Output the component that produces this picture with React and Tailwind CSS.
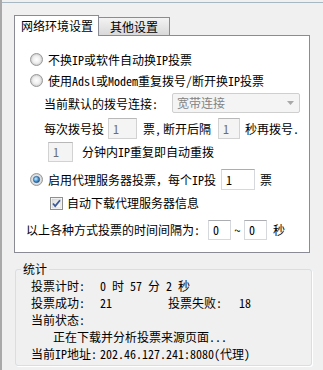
import React from 'react';

const Radio = ({ checked, id }) => (
  <svg width="13" height="13" viewBox="0 0 13 13" className="shrink-0">
    <defs>
      <radialGradient id={`rb-${id}`} cx="0.5" cy="0.5" r="0.5">
        <stop offset="0" stopColor="#ffffff" />
        <stop offset="0.6" stopColor="#eeeeee" />
        <stop offset="1" stopColor="#c8c8c8" />
      </radialGradient>
      <radialGradient id={`rd-${id}`} cx="0.4" cy="0.4" r="0.6">
        <stop offset="0" stopColor="#d6f0ff" />
        <stop offset="0.5" stopColor="#5ca8e0" />
        <stop offset="1" stopColor="#1d4f85" />
      </radialGradient>
    </defs>
    <circle cx="6.5" cy="6.5" r="6" fill={`url(#rb-${id})`} stroke="#9a9a9a" />
    {checked && <circle cx="6.5" cy="6.5" r="3.2" fill={`url(#rd-${id})`} stroke="#2b5d8f" strokeWidth="0.6" />}
  </svg>
);

const Check = () => (
  <svg width="13" height="13" viewBox="0 0 13 13" className="shrink-0">
    <defs>
      <linearGradient id="cbg" x1="0" y1="0" x2="1" y2="1">
        <stop offset="0" stopColor="#dcdcdc" />
        <stop offset="1" stopColor="#ffffff" />
      </linearGradient>
    </defs>
    <rect x="0.5" y="0.5" width="12" height="12" fill="#fff" stroke="#8e8f8f" />
    <rect x="2" y="2" width="9" height="9" fill="url(#cbg)" stroke="#c4c4c4" strokeWidth="0.5" />
    <path d="M3 6.5 L5.2 9 L10 3.2" fill="none" stroke="#3c5a9a" strokeWidth="1.8" />
  </svg>
);

const Box = ({ value, w, h = 'h-[21px]', disabled }) => (
  <div
    className={`${w} ${h} shrink-0 border flex items-center pl-[4px] text-[12px] leading-[12px] ${
      disabled
        ? 'bg-[#f4f4f4] border-[#d2d2d2] border-t-[#b8b8b8] text-[#6d6d6d]'
        : 'bg-white border-[#d5d8dd] border-t-[#abadb3] text-black'
    }`}
  >
    {value}
  </div>
);

export default function App() {
  return (
    <div className="w-[323px] h-[370px] overflow-hidden bg-[#f0f0f0] border-l-2 border-[#a9a9a9] font-['Noto_Sans_Mono_CJK_SC','Noto_Sans_CJK_SC',monospace] text-[12px] leading-[14px] text-black">
      <div className="mt-[2px] h-[368px] border-t border-[#a7b8c2] pl-[12px] pt-[12px]">
        {/* tabs */}
        <div className="flex items-end h-[20px]">
          <div className="relative z-10 w-[85px] h-[21px] -mb-px bg-white border border-b-0 border-[#898c95] pl-[6px] pt-[3px]">
            网络环境设置
          </div>
          <div className="w-[71px] h-[18px] border border-b-0 border-l-0 border-[#898c95] bg-gradient-to-b from-[#f3f3f3] to-[#d9d9d9] flex items-center justify-center pt-[1px]">
            其他设置
          </div>
        </div>

        {/* panel */}
        <div className="w-[296px] h-[218px] border border-[#898c95] bg-white pt-[13px]">
          <div className="flex items-center h-[21px] pl-[15px]">
            <Radio id="a" />
            <span className="ml-[5px]">不换IP或软件自动换IP投票</span>
          </div>
          <div className="flex items-center h-[21px] pl-[15px]">
            <Radio id="b" />
            <span className="ml-[5px]">使用Adsl或Modem重复拨号/断开换IP投票</span>
          </div>
          <div className="flex items-center h-[21px] pl-[29px] mt-px">
            <span className="w-[128px] shrink-0 pt-[2px]">当前默认的拨号连接:</span>
            <div className="w-[128px] h-[20px] rounded-[2px] border border-[#cfcfcf] bg-[#f4f4f4] flex items-center justify-between pl-[4px] pr-[5px] text-[#838383]">
              <span>宽带连接</span>
              <svg width="7" height="4" viewBox="0 0 7 4">
                <path d="M0 0 H7 L3.5 4 Z" fill="#a8a8a8" />
              </svg>
            </div>
          </div>
          <div className="flex items-center h-[21px] pl-[29px] mt-[5px]">
            <span className="w-[64px] shrink-0">每次拨号投</span>
            <Box value="1" w="w-[29px]" disabled />
            <span className="w-[26px] shrink-0 pl-[6px]">票,</span>
            <span className="w-[55px] shrink-0">断开后隔</span>
            <Box value="1" w="w-[22px]" disabled />
            <span className="ml-[5px]">秒再拨号.</span>
          </div>
          <div className="flex items-center h-[20px] pl-[33px] mt-[3px]">
            <Box value="1" w="w-[25px]" h="h-[20px]" disabled />
            <span className="ml-[9px]">分钟内IP重复即自动重拨</span>
          </div>
          <div className="flex items-center h-[21px] pl-[15px] mt-[7px]">
            <Radio id="c" checked />
            <span className="ml-[5px] w-[173px] shrink-0">启用代理服务器投票，每个IP投</span>
            <Box value="1" w="w-[34px]" />
            <span className="ml-[5px]">票</span>
          </div>
          <div className="flex items-center h-[16px] pl-[35px] mt-[5px]">
            <Check />
            <span className="ml-[4px]">自动下载代理服务器信息</span>
          </div>
          <div className="flex items-center h-[20px] pl-[11px] mt-[9px]">
            <span className="w-[182px] shrink-0">以上各种方式投票的时间间隔为:</span>
            <Box value="0" w="w-[23px]" h="h-[20px]" />
            <span className="w-[13px] shrink-0 text-center">~</span>
            <Box value="0" w="w-[23px]" h="h-[20px]" />
            <span className="ml-[6px]">秒</span>
          </div>
        </div>

        {/* stats group */}
        <div className="relative ml-px mt-[16px] w-[297px] h-[97px] rounded-[3px] border border-[#d5dfe5] shadow-[1px_1px_0_#ffffff] pl-[15px] pt-[7px]">
          <span className="absolute -top-[8px] left-[5px] px-[2px] bg-[#f0f0f0]">统计</span>
          <div className="flex items-center h-[17px]">
            <span className="w-[69px] shrink-0">投票计时:</span>
            <span className="whitespace-pre">0 时 57 分 2 秒</span>
          </div>
          <div className="flex items-center h-[17px]">
            <span className="w-[69px] shrink-0">投票成功:</span>
            <span className="w-[68px] shrink-0">21</span>
            <span className="w-[71px] shrink-0">投票失败:</span>
            <span>18</span>
          </div>
          <div className="flex items-center h-[17px]">
            <span>当前状态:</span>
          </div>
          <div className="flex items-center h-[17px] pl-[22px]">
            <span>正在下载并分析投票来源页面...</span>
          </div>
          <div className="flex items-center h-[17px]">
            <span className="w-[69px] shrink-0">当前IP地址:</span>
            <span>202.46.127.241:8080(代理)</span>
          </div>
        </div>
      </div>
    </div>
  );
}
